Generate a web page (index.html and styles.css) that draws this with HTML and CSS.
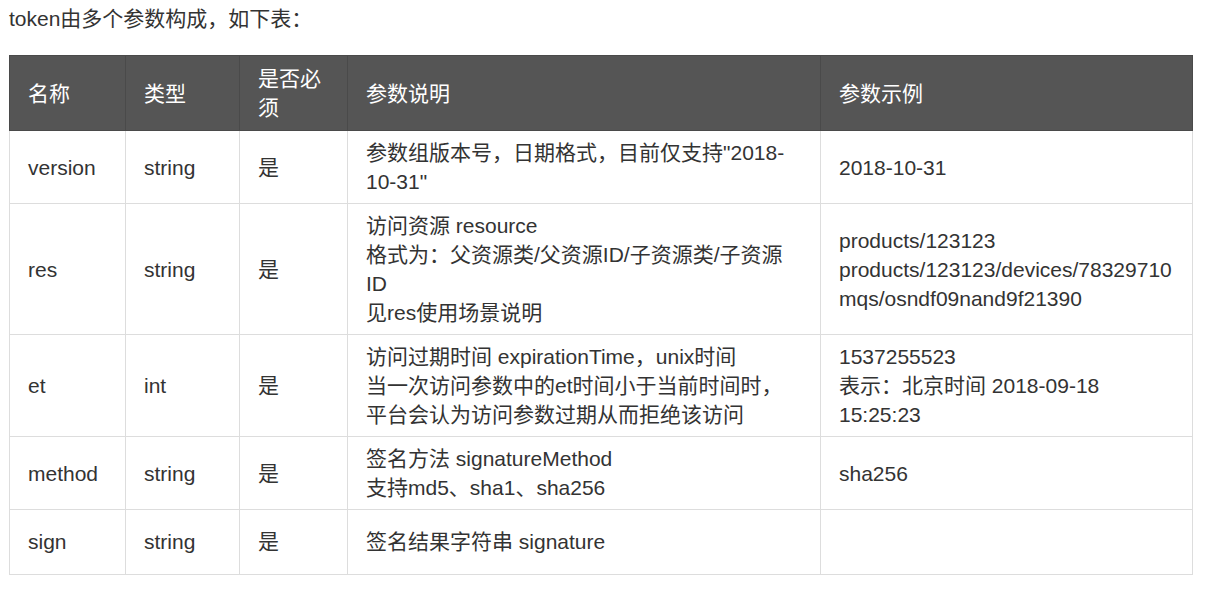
FILE: index.html
```html
<!DOCTYPE html>
<html lang="zh-CN">
<head>
<meta charset="utf-8">
<title>token参数</title>
<link rel="stylesheet" href="styles.css">
</head>
<body>
<p class="intro">token由多个参数构成，如下表：</p>
<table class="params">
  <colgroup>
    <col class="c-name"><col class="c-type"><col class="c-req"><col class="c-desc"><col class="c-ex">
  </colgroup>
  <thead>
    <tr><th>名称</th><th>类型</th><th>是否必须</th><th>参数说明</th><th>参数示例</th></tr>
  </thead>
  <tbody>
    <tr>
      <td>version</td><td>string</td><td>是</td>
      <td>参数组版本号，日期格式，目前仅支持"2018-<wbr>10-31"</td>
      <td>2018-10-31</td>
    </tr>
    <tr>
      <td>res</td><td>string</td><td>是</td>
      <td>访问资源 resource<br>格式为：父资源类/父资源ID/子资源类/子资源ID<br>见res使用场景说明</td>
      <td>products/123123<br>products/123123/devices/78329710<br>mqs/osndf09nand9f21390</td>
    </tr>
    <tr>
      <td>et</td><td>int</td><td>是</td>
      <td>访问过期时间 expirationTime，unix时间<br>当一次访问参数中的et时间小于当前时间时，<br>平台会认为访问参数过期从而拒绝该访问</td>
      <td>1537255523<br>表示：北京时间 2018-09-18 15:25:23</td>
    </tr>
    <tr>
      <td>method</td><td>string</td><td>是</td>
      <td>签名方法 signatureMethod<br>支持md5、sha1、sha256</td>
      <td>sha256</td>
    </tr>
    <tr class="last">
      <td>sign</td><td>string</td><td>是</td>
      <td>签名结果字符串 signature</td>
      <td></td>
    </tr>
  </tbody>
</table>
</body>
</html>
```

FILE: styles.css
```css
html, body {
  margin: 0;
  padding: 0;
  background: #fff;
}
body {
  padding: 0 9px;
  font-family: "Liberation Sans", "Noto Sans CJK SC", sans-serif;
  font-size: 21px;
  line-height: 29px;
  color: #333;
}
.intro {
  margin: 0;
  padding-top: 4px;
  height: 29px;
  margin-bottom: 22px;
}
.params {
  border-collapse: collapse;
  width: 1183px;
  table-layout: fixed;
}
.c-name { width: 116px; }
.c-type { width: 114px; }
.c-req { width: 108px; }
.c-desc { width: 473px; }
.c-ex { width: 372px; }
.params th {
  background: #555555;
  color: #fff;
  font-weight: normal;
  text-align: left;
  padding: 8px 18px 8px 18px;
  border: 1px solid #4a4a4a;
  vertical-align: middle;
}
.params td {
  padding: 7px 18px;
  border: 1px solid #dddddd;
  vertical-align: middle;
}
.params tr.last td {
  padding-top: 17px;
  padding-bottom: 18px;
}
```
